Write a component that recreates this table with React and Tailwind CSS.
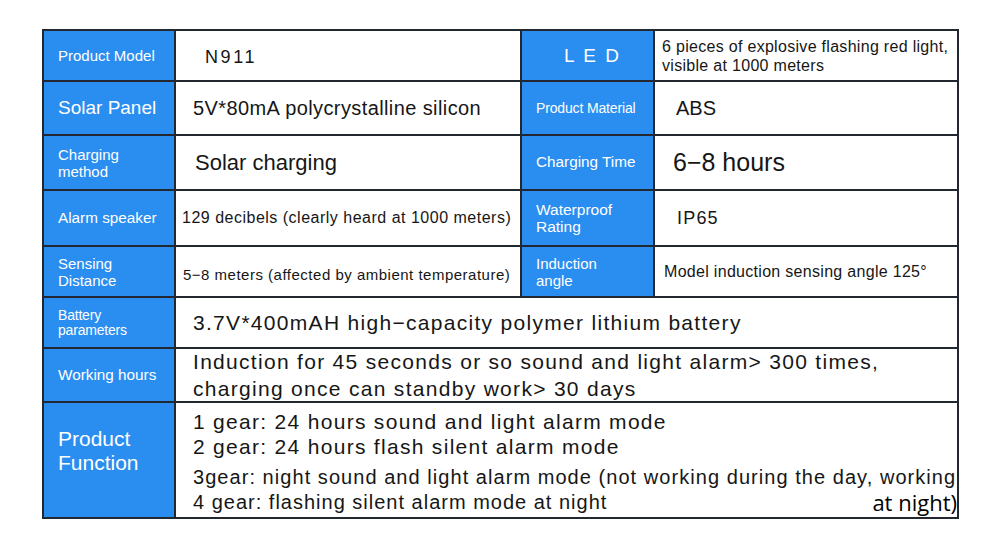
const label = 'bg-[#2a8df0] text-white flex items-center pl-[14px] pr-1 leading-[1.05]';
const value = 'bg-white text-[#161616] flex items-center';

export default function App() {
  return (
    <div className="w-full h-[555px] bg-white pt-[29px] pl-[42px]" style={{ fontFamily: '"Liberation Sans", Arial, sans-serif' }}>
      <div className="grid w-[917px] grid-cols-[130px_344px_131px_302px] grid-rows-[49px_52px_53px_54px_49px_49px_52px_114px] gap-[2px] bg-[#23272f] p-[2px]">
        {/* row 1 */}
        <div className={`${label} text-[15px]`}>Product Model</div>
        <div className={`${value} pl-[29px] text-[18px] tracking-[2.6px] pt-[3px]`}>N911</div>
        <div className={`${label} justify-center pl-[4px] text-[19px] tracking-[2px] whitespace-pre`}>L E D</div>
        <div className={`${value} pl-[7px] text-[16px] leading-[19px] tracking-[0.3px] text-[#2a2a2a]`}>
          6 pieces of explosive flashing red light,<br />visible at 1000 meters
        </div>

        {/* row 2 */}
        <div className={`${label} text-[19px]`}>Solar Panel</div>
        <div className={`${value} pl-[17px] text-[20px] tracking-[0.4px]`}>5V*80mA polycrystalline silicon</div>
        <div className={`${label} text-[14px] tracking-[-0.15px]`}>Product Material</div>
        <div className={`${value} pl-[21px] text-[20px]`}>ABS</div>

        {/* row 3 */}
        <div className={`${label} text-[15px] leading-[17px]`}>Charging<br />method</div>
        <div className={`${value} pl-[19px] text-[22px]`}>Solar charging</div>
        <div className={`${label} text-[15.3px]`}>Charging Time</div>
        <div className={`${value} pl-[18px] text-[25px]`}>6−8 hours</div>

        {/* row 4 */}
        <div className={`${label} text-[15.3px]`}>Alarm speaker</div>
        <div className={`${value} pl-[6px] text-[16px] tracking-[0.5px]`}>129 decibels (clearly heard at 1000 meters)</div>
        <div className={`${label} text-[15.5px] leading-[17px]`}>Waterproof<br />Rating</div>
        <div className={`${value} pl-[22px] text-[18px] tracking-[1.2px]`}>IP65</div>

        {/* row 5 */}
        <div className={`${label} text-[15px] leading-[17px]`}>Sensing<br />Distance</div>
        <div className={`${value} pl-[7px] pt-[8px] text-[15px] tracking-[0.5px]`}>5−8 meters (affected by ambient temperature)</div>
        <div className={`${label} text-[15px] leading-[17px]`}>Induction<br />angle</div>
        <div className={`${value} pl-[9px] text-[16px] tracking-[0.3px]`}>Model induction sensing angle 125°</div>

        {/* row 6 */}
        <div className={`${label} text-[14px] leading-[15px] tracking-[-0.2px]`}>Battery<br />parameters</div>
        <div className={`${value} col-span-3 pl-[17px] text-[21px] tracking-[1.3px]`}>3.7V*400mAH high−capacity polymer lithium battery</div>

        {/* row 7 */}
        <div className={`${label} text-[15.3px]`}>Working hours</div>
        <div className={`${value} col-span-3 pl-[17px] text-[21px] leading-[27px] tracking-[1.3px]`}>
          <div>
            Induction for 45 seconds or so sound and light alarm&gt; 300 times,<br />
            charging once can standby work&gt; 30 days
          </div>
        </div>

        {/* row 8 */}
        <div className={`${label} text-[21px] leading-[24px] pb-[18px]`}>Product<br />Function</div>
        <div className="col-span-3 bg-white text-[#161616] pl-[17px] pt-[6px]">
          <div className="text-[21px] leading-[25px] tracking-[1.3px]">1 gear: 24 hours sound and light alarm mode</div>
          <div className="text-[21px] leading-[25px] tracking-[1.3px]">2 gear: 24 hours flash silent alarm mode</div>
          <div className="text-[20px] leading-[25px] mt-[6px] whitespace-nowrap tracking-[1.05px]">3gear: night sound and light alarm mode (not working during the day, working</div>
          <div className="flex justify-between items-end leading-[25px]">
            <span className="text-[20px] tracking-[1px]">4 gear: flashing silent alarm mode at night</span>
            <span className="text-[22px] leading-[25px] text-black" style={{ fontFamily: '"Open Sans", sans-serif' }}>at night)</span>
          </div>
        </div>
      </div>
    </div>
  );
}
